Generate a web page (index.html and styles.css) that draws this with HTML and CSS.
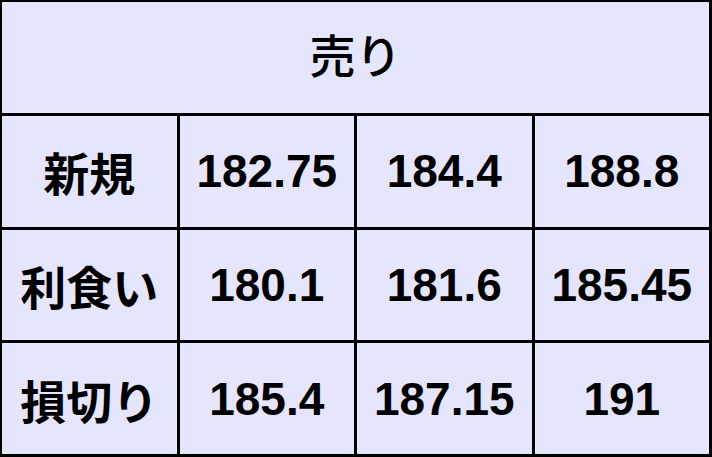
FILE: index.html
```html
<!DOCTYPE html>
<html lang="ja">
<head>
<meta charset="utf-8">
<title>売り</title>
<link rel="stylesheet" href="styles.css">
</head>
<body>
<div class="table">
  <div class="cell head">売り</div>
  <div class="cell label">新規</div>
  <div class="cell num">182.75</div>
  <div class="cell num">184.4</div>
  <div class="cell num">188.8</div>
  <div class="cell label">利食い</div>
  <div class="cell num">180.1</div>
  <div class="cell num">181.6</div>
  <div class="cell num">185.45</div>
  <div class="cell label">損切り</div>
  <div class="cell num">185.4</div>
  <div class="cell num">187.15</div>
  <div class="cell num">191</div>
</div>
</body>
</html>
```
FILE: styles.css
```css
html, body {
  margin: 0;
  padding: 0;
  background: #e5e5fe;
}
.table {
  box-sizing: border-box;
  width: 712px;
  height: 457px;
  background: #000;
  padding: 2px 3px 3px 2px;
  display: grid;
  grid-template-columns: repeat(4, 1fr);
  grid-template-rows: repeat(4, 1fr);
  gap: 3px;
}
.cell {
  background: #e5e5fe;
  display: flex;
  align-items: center;
  justify-content: center;
  font-family: "Liberation Sans", "Noto Sans CJK JP", sans-serif;
  font-size: 46px;
  font-weight: 700;
  line-height: 1;
  color: #000;
}
.head {
  grid-column: 1 / -1;
  font-weight: 500;
}
.label {
  font-family: "Noto Sans CJK JP", sans-serif;
}
```
